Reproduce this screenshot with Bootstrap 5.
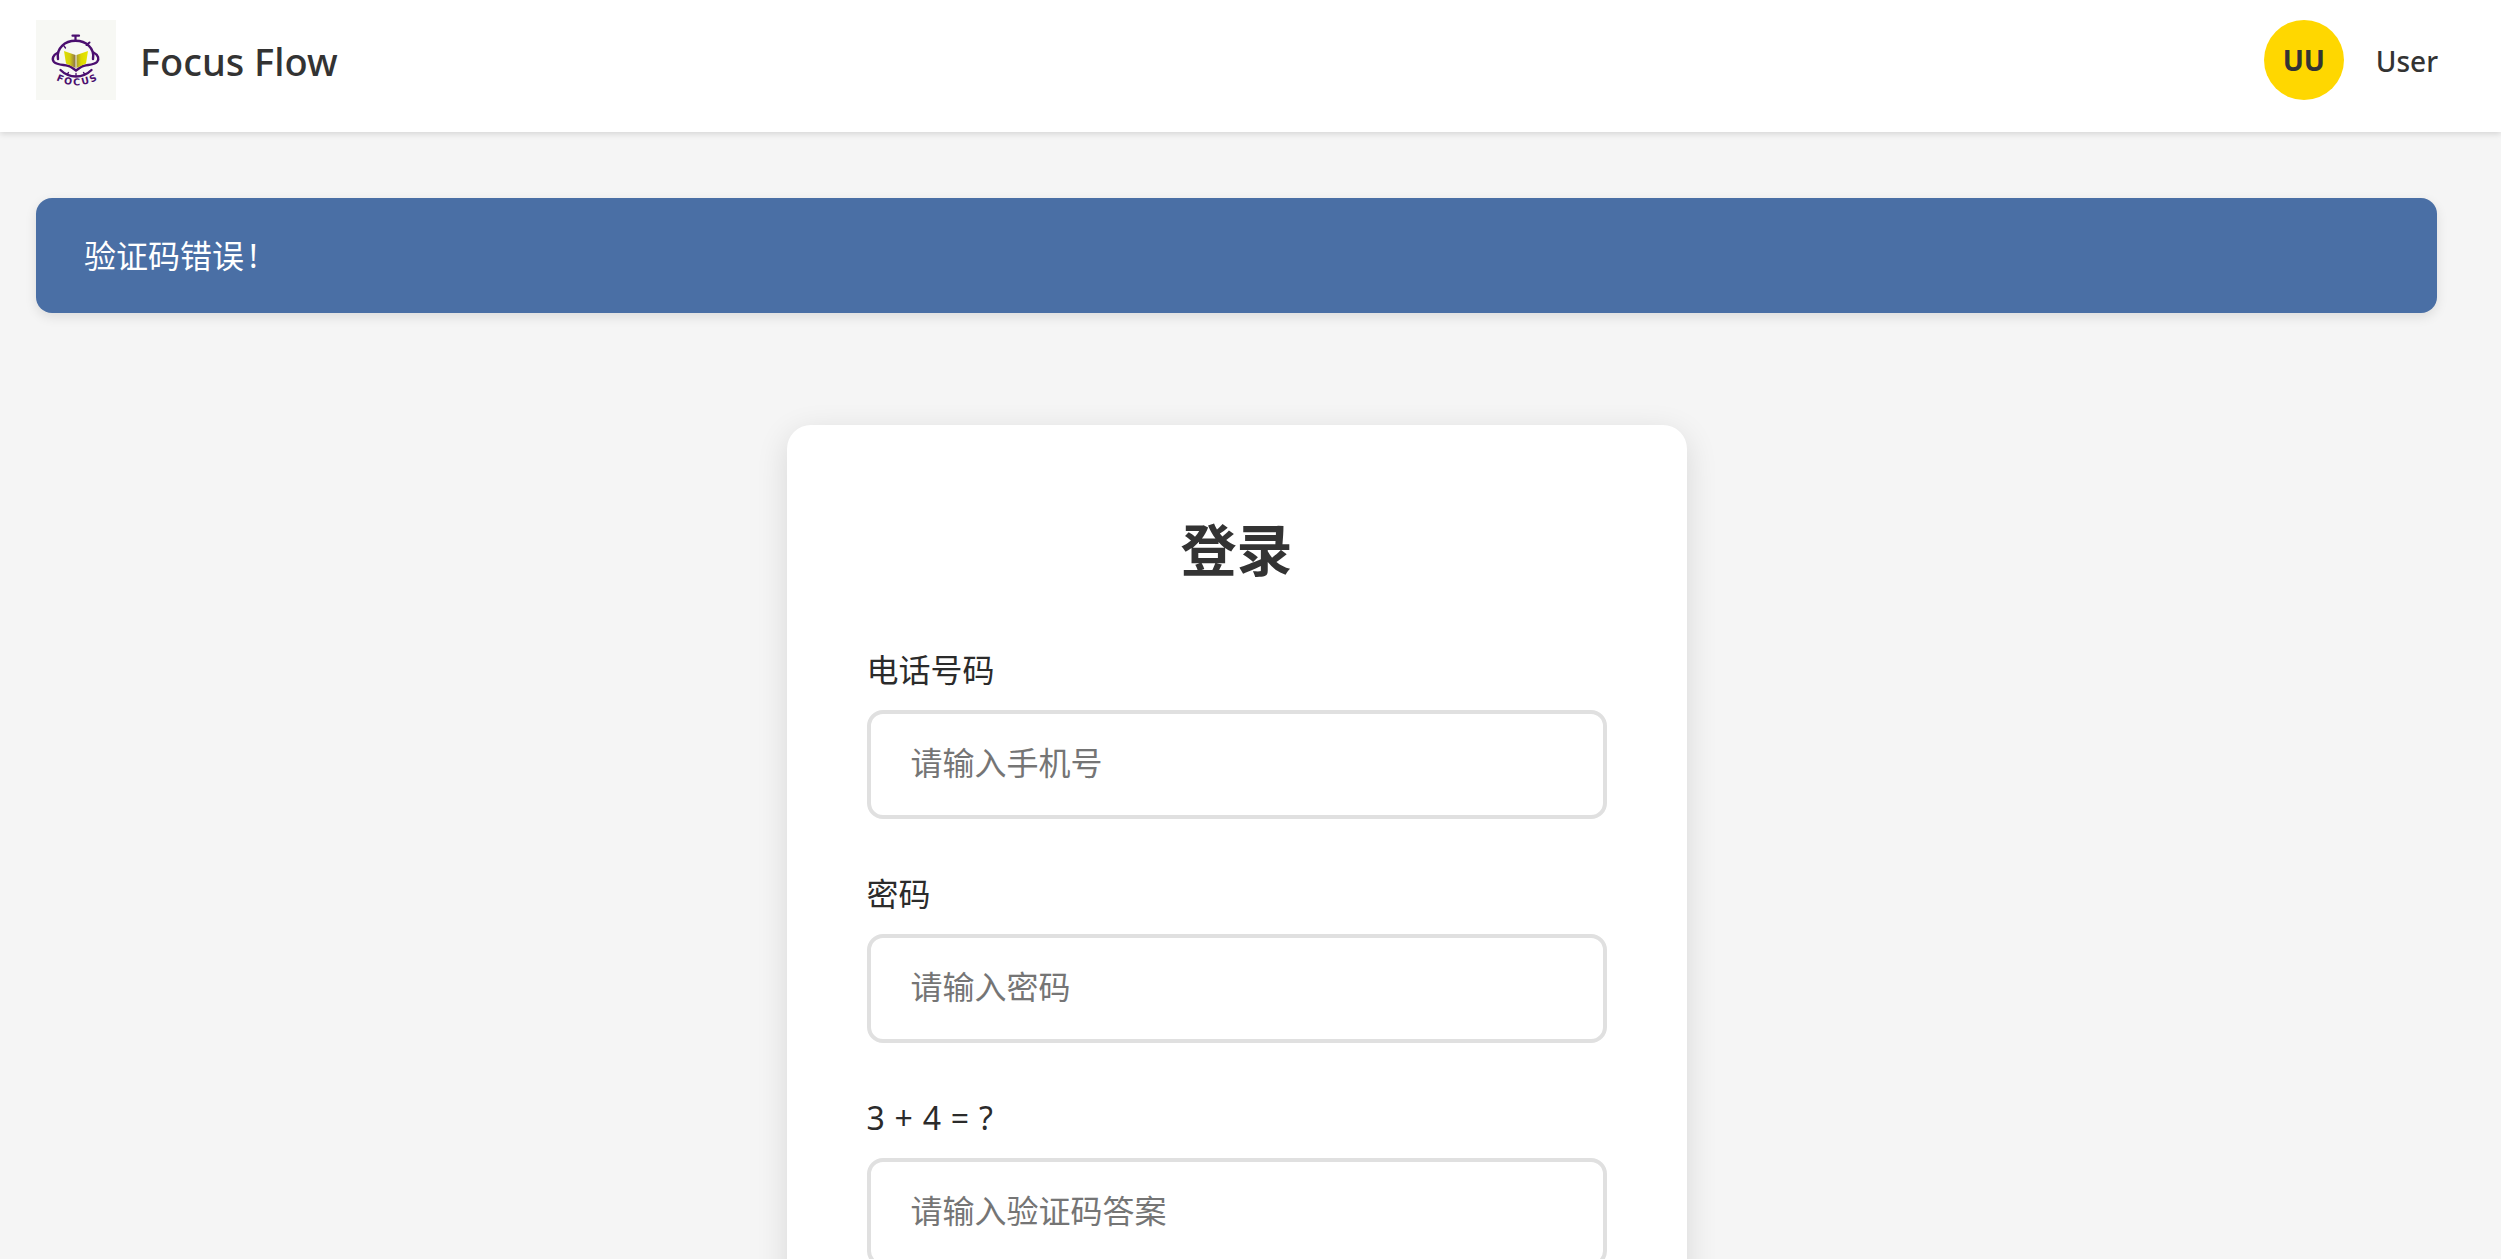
<!DOCTYPE html>
<html lang="zh-CN">
<head>
<meta charset="utf-8">
<title>Focus Flow</title>
<link href="https://cdn.jsdelivr.net/npm/bootstrap@5.3.0/dist/css/bootstrap.min.css" rel="stylesheet">
<style>
html,body{height:100%;overflow:hidden}
body{background:#f5f5f5;color:#333;font-family:"Noto Sans","Noto Sans CJK SC",sans-serif}
.ff-head{height:132px;padding:20px 63px 32px 36px;background:#fff;box-shadow:0 2px 6px rgba(0,0,0,.13)}
.ff-logo{width:80px;height:80px;display:block;background:#f7f8f4}
.ff-name{font-size:38px;font-weight:500;color:#333;line-height:1;margin-left:24px;padding:2px 0 0}
.ff-avatar{width:80px;height:80px;background:#ffd700;color:#333;font-size:28px;font-weight:700}
.ff-user{font-size:28px;font-weight:500;color:#333;margin-left:32px;padding-top:2px}
.ff-main{padding:66px 64px 0 36px}
.ff-alert{height:115px;margin:0 0 112px;padding:0 48px;background:#4a6fa5;border:0;border-radius:16px;color:#fff;font-size:32px;box-shadow:0 4px 12px rgba(0,0,0,.1)}
.ff-bang{margin-left:5px}
.ff-card{width:900px;margin:0 auto;padding:80px;background:#fff;border:0;border-radius:24px;box-shadow:0 8px 32px rgba(0,0,0,.12)}
.ff-title{font-size:56px;font-weight:700;color:#333;line-height:88px;margin-bottom:0;text-align:center}
.ff-group{margin-top:52px}
.ff-title + .ff-group{margin-top:54px}
.ff-label{font-size:32px;line-height:46px;margin-bottom:17px;color:#2b2b2b;font-weight:400;display:block}
.ff-math{word-spacing:1.5px}
.ff-input.form-control{height:109px;padding:0 40px 4px;border:4px solid #e0e0e0;border-radius:16px;font-size:32px;color:#333}
.ff-input.form-control::placeholder{color:#757575}
</style>
</head>
<body>
<header class="navbar ff-head d-flex justify-content-between align-items-start flex-nowrap">
  <div class="d-flex align-items-center">
    <svg class="ff-logo" viewBox="0 0 80 80" role="img" aria-label="Focus logo">
      <defs>
        <linearGradient id="pgL" x1="0" x2="1" y1="0" y2="0"><stop offset="0" stop-color="#dfe000"/><stop offset=".5" stop-color="#d4cf10"/><stop offset="1" stop-color="#8a7048"/></linearGradient>
        <linearGradient id="pgR" x1="0" x2="1" y1="0" y2="0"><stop offset="0" stop-color="#a89a30"/><stop offset=".4" stop-color="#dcd800"/><stop offset="1" stop-color="#e8e800"/></linearGradient>
        <path id="arcT" d="M20 60 Q41 71 63 59"/>
      </defs>
      <g fill="none" stroke="#4b0f6f" stroke-linecap="round">
        <path stroke-width="2.400" d="M22 39 C20 28 29 20.800 39.500 20.800 C50 20.800 59 28 57 39"/>
        <path stroke-width="2.400" d="M22 32.500 C17 35 15.500 39 18 42 C22 46 31 44 35 47 L40 50.500 L45 47 C49 44 57 46 61 42 C63.500 39 62.500 35 57.500 32.500"/>
        <path stroke-width="2.400" d="M24.500 50 C29 54.500 35 56.500 40 56.500 C45 56.500 51 54.500 55.500 50"/>
        <path stroke-width="2.200" d="M39.500 16.500V20.500M36.500 15.700H43"/>
        <path stroke-width="2" d="M50.500 25L53.500 22.500"/>
        <path stroke-width="1.300" d="M28 26L29.500 28M40 56V53.500M31 54.500L32.500 52.500M49 54.500L47.500 52.500"/>
      </g>
      <polygon fill="url(#pgL)" points="28,31 39.500,35 39.500,48 30,43.500"/>
      <polygon fill="url(#pgR)" points="40.500,35 52,31 50,43.500 40.500,48"/>
      <text font-family="'DejaVu Sans',sans-serif" font-weight="700" font-size="9.500" fill="#4b0f6f" letter-spacing="1.800"><textPath href="#arcT">FOCUS</textPath></text>
    </svg>
    <span class="navbar-brand ff-name">Focus Flow</span>
  </div>
  <div class="d-flex align-items-center">
    <div class="ff-avatar rounded-circle d-flex align-items-center justify-content-center">UU</div>
    <span class="ff-user">User</span>
  </div>
</header>
<main class="ff-main">
  <div class="alert ff-alert d-flex align-items-center" role="alert"><span>验证码错误</span><span class="ff-bang">!</span></div>
  <form class="card ff-card">
    <h1 class="ff-title">登录</h1>
    <div class="ff-group">
      <label class="form-label ff-label" for="ph">电话号码</label>
      <input class="form-control ff-input" id="ph" type="text" placeholder="请输入手机号">
    </div>
    <div class="ff-group">
      <label class="form-label ff-label" for="pw">密码</label>
      <input class="form-control ff-input" id="pw" type="password" placeholder="请输入密码">
    </div>
    <div class="ff-group">
      <label class="form-label ff-label ff-math" for="cap">3 + 4 = ?</label>
      <input class="form-control ff-input" id="cap" type="text" placeholder="请输入验证码答案">
    </div>
  </form>
</main>
</body>
</html>
